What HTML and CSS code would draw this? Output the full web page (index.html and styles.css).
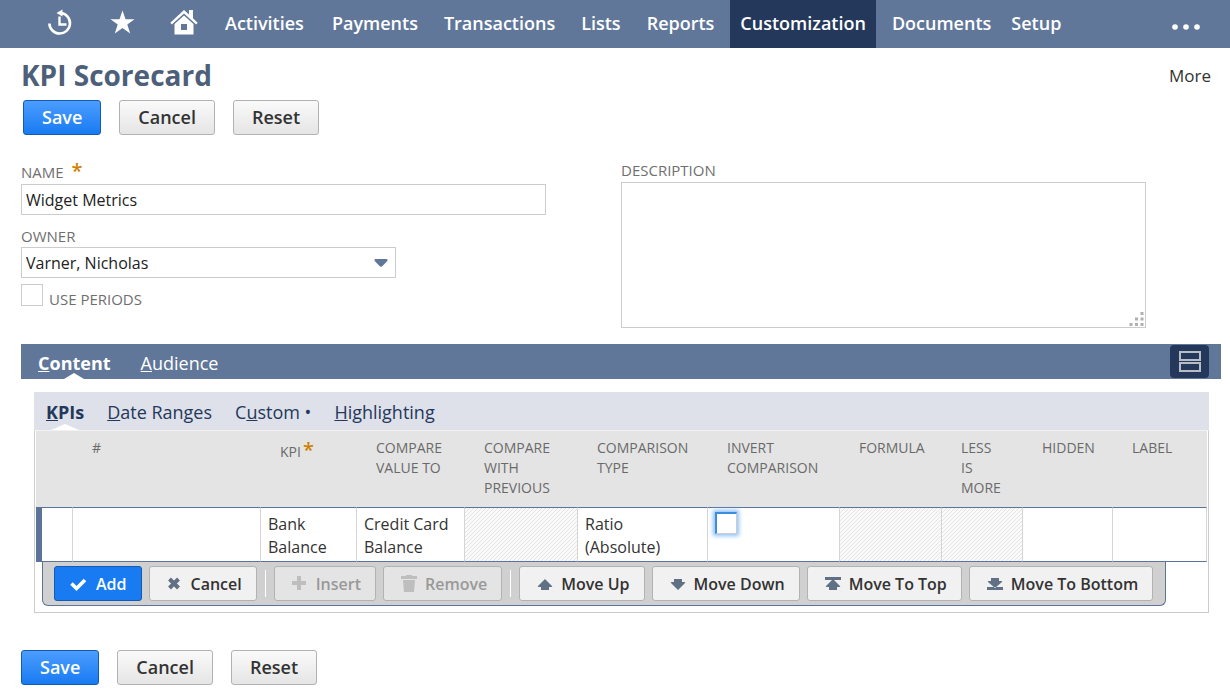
FILE: index.html
```html
<!DOCTYPE html>
<html lang="en">
<head>
<meta charset="utf-8">
<title>KPI Scorecard</title>
<link rel="stylesheet" href="styles.css">
</head>
<body>
<header class="topbar">
  <nav class="nav">
    <a class="nav-icon" href="#" aria-label="Recent records"><svg width="28" height="28" viewBox="0 0 28 28" fill="none" stroke="#fff"><path d="M3.400 14.500A10.300 10.300 0 1 0 15 4" stroke-width="2.600"/><path d="M16.500.5v7L10.500 4z" fill="#fff" stroke="none"/><path d="M13.500 7.500v8h7" stroke-width="2.400"/></svg></a>
    <a class="nav-icon" href="#" aria-label="Shortcuts"><svg width="28" height="28" viewBox="0 0 28 28"><path d="M14.500 1.500l3 8.700h9l-7.200 5.300 2.900 9-7.700-5.500-7.700 5.500 2.900-9-7.200-5.300h9z" fill="#fff"/></svg></a>
    <a class="nav-icon" href="#" aria-label="Home"><svg width="28" height="28" viewBox="0 0 28 28"><path d="M14 1l5 4.500V1h4v8.200l4.700 4.500-1.500 1.900L14 4.600 1.800 15.600.3 13.700z" fill="#fff"/><path d="M14 6.500l9.500 8.500v10.500h-19V15zM11 15v6h6v-6z" fill="#fff" fill-rule="evenodd"/></svg></a>
    <a class="nav-link first" href="#">Activities</a>
    <a class="nav-link" href="#">Payments</a>
    <a class="nav-link" href="#">Transactions</a>
    <a class="nav-link" href="#">Lists</a>
    <a class="nav-link" href="#">Reports</a>
    <a class="nav-link current" href="#">Customization</a>
    <a class="nav-link last" href="#">Documents</a>
    <a class="nav-link last" href="#">Setup</a>
  </nav>
  <button class="overflow" type="button" aria-label="More menus"><svg width="28" height="8" viewBox="0 0 28 8" fill="#fff"><circle cx="3" cy="4" r="2.800"/><circle cx="14" cy="4" r="2.800"/><circle cx="25" cy="4" r="2.800"/></svg></button>
</header>

<main class="page">
  <div class="heading">
    <h1 class="title">KPI Scorecard</h1>
    <a class="more" href="#">More</a>
  </div>
  <div class="actions top">
    <button class="btn primary" type="button">Save</button>
    <button class="btn" type="button">Cancel</button>
    <button class="btn" type="button">Reset</button>
  </div>

  <form class="fields">
    <div class="column">
      <label class="label" for="name">NAME <span class="star">*</span></label>
      <input class="box" id="name" type="text" value="Widget Metrics">
      <label class="label owner-label" for="owner">OWNER</label>
      <div class="select-wrap">
        <select class="box" id="owner"><option>Varner, Nicholas</option></select>
        <svg class="arrow" width="14" height="8" viewBox="0 0 14 8"><path d="M1.500 0h11q1.500 0 .8 2L8.500 7q-1.500 1.500-3 0L.7 2Q0 0 1.500 0z" fill="#607799"/></svg>
      </div>
      <div class="check-row">
        <input class="check" id="periods" type="checkbox">
        <label class="label" for="periods">USE PERIODS</label>
      </div>
    </div>
    <div class="column">
      <label class="label desc-label" for="description">DESCRIPTION</label>
      <div class="area-wrap">
        <textarea class="area" id="description"></textarea>
        <svg class="grip" width="15" height="15" viewBox="0 0 15 15" fill="#b0b0b0"><path d="M11.500 1h3v3h-3zM6 6.500h3v3H6zM11.500 6.500h3v3h-3zM.5 12h3v3h-3zM6 12h3v3H6zM11.500 12h3v3h-3z"/></svg>
      </div>
    </div>
  </form>

  <div class="tabs">
    <a class="tab active" href="#"><u>C</u>ontent</a>
    <a class="tab" href="#"><u>A</u>udience</a>
    <button class="layout-btn" type="button" aria-label="Toggle layout"><svg width="22" height="22" viewBox="0 0 22 22" fill="none" stroke="#b9bcc4" stroke-width="2"><path d="M1 1h20v8H1zM1 12h20v8H1z"/></svg></button>
  </div>

  <section class="panel">
    <div class="subtabs">
      <a class="subtab active" href="#"><u>K</u>PIs</a>
      <a class="subtab" href="#"><u>D</u>ate Ranges</a>
      <a class="subtab" href="#">C<u>u</u>stom •</a>
      <a class="subtab" href="#"><u>H</u>ighlighting</a>
    </div>
    <div class="list">
      <table class="grid">
        <colgroup><col class="c-mark"><col class="c-num"><col class="c-kpi"><col class="c-value"><col class="c-prev"><col class="c-type"><col class="c-invert"><col class="c-formula"><col class="c-less"><col class="c-hidden"><col class="c-label"></colgroup>
        <thead>
          <tr><th></th><th>#</th><th class="kpi">KPI<span class="star">*</span></th><th>COMPARE VALUE TO</th><th>COMPARE WITH PREVIOUS</th><th>COMPARISON TYPE</th><th>INVERT COMPARISON</th><th>FORMULA</th><th>LESS<br>IS<br>MORE</th><th>HIDDEN</th><th>LABEL</th></tr>
        </thead>
        <tbody>
          <tr><td class="marker"></td><td></td><td>Bank Balance</td><td>Credit Card Balance</td><td class="off"></td><td>Ratio (Absolute)</td><td class="check-cell"><input class="check focused" type="checkbox" aria-label="Invert comparison"></td><td class="off"></td><td class="off"></td><td></td><td></td></tr>
        </tbody>
      </table>
      <div class="tools">
        <button class="tool add" type="button"><svg width="20" height="20" viewBox="0 0 20 20"><path d="M1.500 9.500l5 5L15 6" fill="none" stroke="#fff" stroke-width="3.600"/></svg>Add</button>
        <button class="tool" type="button"><svg width="20" height="20" viewBox="0 0 20 20"><path d="M4.500 5l9 9M13.500 5l-9 9" fill="none" stroke="#607085" stroke-width="4"/></svg>Cancel</button>
        <span class="sep"></span>
        <button class="tool" type="button" disabled><svg width="20" height="20" viewBox="0 0 20 20"><path d="M9 2v14M2 9h14" fill="none" stroke="#bebebe" stroke-width="4"/></svg>Insert</button>
        <button class="tool" type="button" disabled><svg width="20" height="20" viewBox="0 0 20 20" fill="#bebebe"><path d="M7 1h6v1h5v3H2V2h5zM4 6h12l-1 12H5z"/></svg>Remove</button>
        <span class="sep"></span>
        <button class="tool" type="button"><svg width="20" height="20" viewBox="0 0 20 20" fill="#607085"><path d="M10 5l7 7q1 1-1 1h-2v3H6v-3H4q-2 0-1-1z"/></svg>Move Up</button>
        <button class="tool" type="button"><svg width="20" height="20" viewBox="0 0 20 20" fill="#607085"><path d="M10 16l7-7q1-1-1-1h-2V5H6v3H4q-2 0-1 1z"/></svg>Move Down</button>
        <button class="tool" type="button"><svg width="20" height="20" viewBox="0 0 20 20" fill="#607085"><path d="M2 3h16v3H2zM10 5l7 7q1 1-1 1h-2v3H6v-3H4q-2 0-1-1z"/></svg>Move To Top</button>
        <button class="tool" type="button"><svg width="20" height="20" viewBox="0 0 20 20" fill="#607085"><path d="M2 13h16v3H2zM10 14l7-6q1-1-1-1h-2V4H6v3H4q-2 0-1 1z"/></svg>Move To Bottom</button>
      </div>
    </div>
  </section>

  <div class="actions">
    <button class="btn primary" type="button">Save</button>
    <button class="btn" type="button">Cancel</button>
    <button class="btn" type="button">Reset</button>
  </div>
</main>
</body>
</html>
```
FILE: styles.css
```css
* { box-sizing: border-box; }
body { margin: 0; background: #fff; color: #333; font: 16px/24px "Open Sans", "Noto Sans", sans-serif; }
a { color: inherit; text-decoration: none; }
svg { display: block; flex: none; }
button { font: inherit; cursor: pointer; }

.topbar { display: flex; justify-content: space-between; height: 48px; background: #607799; color: #fff; }
.nav { display: flex; padding-left: 46px; }
.nav-icon { display: flex; align-items: center; width: 62px; padding-bottom: 2px; }
.nav-icon:nth-child(3) { width: 42px; }
.nav-link { display: flex; align-items: center; padding: 0 13px 2px; font-size: 18px; font-weight: 600; }
.nav-link.first { padding-right: 15px; }
.nav-link.current { padding: 0 10px 2px; margin: 0 6px 0 3px; background: #24385b; }
.nav-link.last { padding: 0 10px 2px; }
.overflow { display: flex; align-items: center; padding: 6px 30px 0; border: 0; background: none; }

.page { padding: 8px 9px 8px 21px; }
.heading { display: flex; justify-content: space-between; align-items: center; padding-right: 10px; }
.title { margin: 0; color: #4d5f79; font-size: 28px; line-height: 38px; font-weight: 700; }
.more { padding-top: 2px; font-size: 17px; }

.actions { display: flex; gap: 18px; }
.actions.top { padding: 6px 0 0 2px; }
.btn { height: 35px; padding: 0 18px 1px; border: 1px solid #b2b2b2; border-radius: 3px; background: linear-gradient(#fafafa, #e5e5e5); color: #333; font-size: 18px; font-weight: 600; }
.btn.primary { border-color: #125ab2; background: linear-gradient(#4c9dff, #187bf2); color: #fff; }

.fields { display: grid; grid-template-columns: 1fr 1fr; padding-top: 25px; }
.column { display: flex; flex-direction: column; align-items: flex-start; }
.label { color: #6f6f6f; font-size: 15px; line-height: 20px; padding: 2px 0; }
.star { margin-left: 4px; color: #d17f00; font-size: 20px; line-height: 16px; font-weight: 600; }
.box { width: 525px; max-width: 90%; height: 31px; padding: 0 4px; border: 1px solid #ccc; border-radius: 0; background: #fff; color: #222; font: 16px "Open Sans", "Noto Sans", sans-serif; appearance: none; }
.owner-label { padding: 11px 0 1px; }
.select-wrap { position: relative; width: 375px; }
.select-wrap .box { display: block; width: 100%; max-width: none; }
.arrow { position: absolute; right: 8px; top: 12px; pointer-events: none; }
.check-row { display: flex; gap: 6px; padding-top: 6px; }
.check { width: 22px; height: 22px; margin: 0; border: 1px solid #ccc; background: #fff; appearance: none; }
.check-row .label { padding: 5px 0 0; }
.desc-label { padding: 0 0 2px; }
.area-wrap { position: relative; width: 525px; max-width: 90%; }
.area { display: block; width: 100%; height: 146px; border: 1px solid #ccc; resize: none; font: inherit; }
.grip { position: absolute; right: 2px; bottom: 2px; }

.tabs { display: flex; gap: 30px; margin-top: 16px; padding: 0 12px 0 17px; height: 35px; background: #607799; color: #fff; font-size: 18px; }
.tab, .subtab { position: relative; display: flex; align-items: center; white-space: pre; }
.tab { padding-top: 3px; }
.active { font-weight: 700; }
.active::after { content: ""; position: absolute; bottom: 0; left: 50%; margin-left: -10px; border: solid transparent; border-width: 0 10px 6px; border-bottom-color: #fff; }
.layout-btn { display: flex; align-items: center; justify-content: center; align-self: center; margin-left: auto; width: 39px; height: 33px; padding: 0; border: 0; border-radius: 4px; background: #24385b; }

.panel { margin: 13px 12px 0 13px; }
.subtabs { display: flex; gap: 23px; height: 38px; padding: 2px 12px 0; background: #dee1e9; color: #24385b; font-size: 18px; }
.subtab.active::after { margin-left: -14px; border-width: 0 14px 6px; }
.list { padding: 0 1px 6px; border: 1px solid #ccc; border-top-color: #f2f2f2; }
.grid { width: 100%; table-layout: fixed; border-collapse: separate; border-spacing: 0; }
.c-mark { width: 37px; } .c-num { width: 188px; } .c-kpi { width: 96px; } .c-value { width: 108px; } .c-prev { width: 113px; } .c-type { width: 130px; } .c-invert { width: 132px; } .c-formula { width: 102px; } .c-less { width: 81px; } .c-hidden { width: 90px; } .c-label { width: 94px; }
.grid th { height: 76px; padding: 7px 8px 8px 19px; background: #e4e4e4; color: #6a6a6a; font-size: 14px; line-height: 20px; font-weight: 400; text-align: left; vertical-align: top; }
.grid th.kpi { padding-top: 11px; padding-right: 0; }
.grid td { height: 55px; padding: 5px 7px 2px; border: solid #d5d5d5; border-width: 1px 1px 1px 0; border-top-color: #5c7499; border-bottom-color: #5c7499; font-size: 16px; line-height: 23px; vertical-align: top; }
.grid td.marker { border-left: 6px solid #5c7499; }
.grid td.off { background: linear-gradient(135deg, #e4e4e4 12.5%, #fafafa 12.5% 50%, #e4e4e4 50% 62.5%, #fafafa 62.5%) 0 0 / 4px 4px; }
.grid .check-cell { padding: 4px 7px 2px; }
.kpi .star { margin-left: 2px; }
.check.focused { display: block; border-color: #3a8de0 #ccc #ccc #3a8de0; border-width: 2px 1px 1px 2px; box-shadow: 0 0 4px 2px #8fc2f8; }

.tools { display: flex; gap: 7px; width: fit-content; margin-left: 6px; padding: 4px 12px 4px 11px; border: 1px solid #5c7499; border-top: 0; border-radius: 0 0 6px 6px; background: #d0d0d0; }
.tool { display: flex; align-items: center; gap: 6px; height: 35px; padding: 0 14px 0 15px; border: 1px solid #b2b2b2; border-radius: 3px; background: #f1f1f1; color: #333; font-size: 16px; font-weight: 600; white-space: nowrap; }
.tool.add { border-color: #125ab2; background: #187bf2; color: #fff; }
.tool:disabled { background: #e4e4e4; color: #999; }
.sep { width: 1px; height: 27px; margin: 0 1px; background: #fff; align-self: center; }
.panel + .actions { padding-top: 37px; }
```
